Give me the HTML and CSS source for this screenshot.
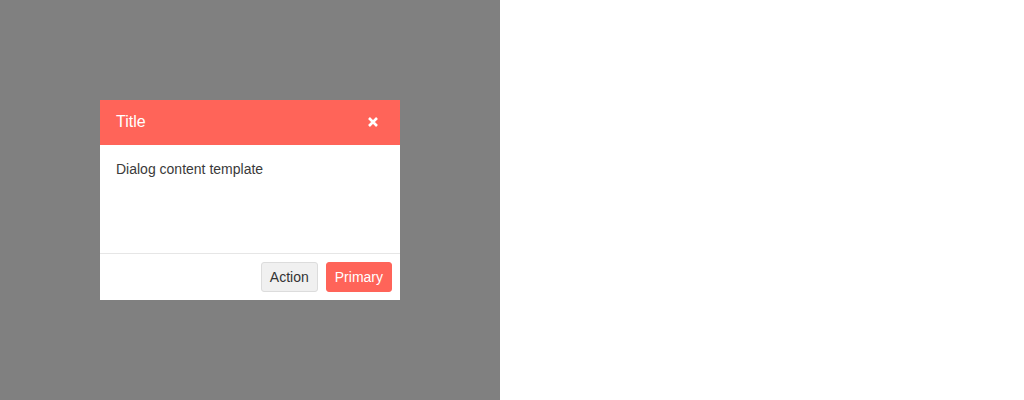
FILE: index.html
```html
<!DOCTYPE html>
<html>
<head>
<meta charset="utf-8">
<link rel="stylesheet" href="styles.css">
</head>
<body>
<div class="stage">
  <div class="overlay">
    <div class="dialog">
      <div class="dialog-header">
        <span class="dialog-title">Title</span>
        <button class="dialog-close" aria-label="Close">
          <svg width="10" height="10" viewBox="0 0 10 10"><path d="M1 1L9 9M9 1L1 9" stroke="#fff" stroke-width="2.6" stroke-linecap="butt"/></svg>
        </button>
      </div>
      <div class="dialog-body">Dialog content template</div>
      <div class="dialog-footer">
        <button class="btn btn-default">Action</button>
        <button class="btn btn-primary">Primary</button>
      </div>
    </div>
  </div>
</div>
</body>
</html>
```
FILE: styles.css
```css
html, body {
  margin: 0;
  padding: 0;
  background: #fff;
  font-family: "Liberation Sans", Arial, sans-serif;
}
.stage {
  width: 1024px;
  height: 400px;
  display: flex;
}
.overlay {
  width: 500px;
  height: 400px;
  background: #808080;
  padding: 100px 0 0 100px;
  box-sizing: border-box;
}
.dialog {
  width: 300px;
  height: 200px;
  background: #fff;
  display: flex;
  flex-direction: column;
}
.dialog-header {
  height: 45px;
  box-sizing: border-box;
  background: #ff6459;
  display: flex;
  align-items: center;
  justify-content: space-between;
  padding: 0 16px 2px 16px;
  color: #fff;
  flex: none;
}
.dialog-title {
  font-size: 16px;
}
.dialog-close {
  background: none;
  border: 0;
  padding: 0;
  margin-right: 6px;
  margin-top: 1px;
  width: 10px;
  height: 10px;
  display: flex;
}
.dialog-body {
  flex: 1;
  padding: 15px 16px;
  font-size: 14px;
  color: #3a3a3a;
  line-height: 18px;
}
.dialog-footer {
  border-top: 1px solid #e6e6e6;
  padding: 8px;
  display: flex;
  justify-content: flex-end;
  gap: 8px;
  flex: none;
}
.btn {
  height: 30px;
  padding: 0 8px;
  font-family: "Liberation Sans", Arial, sans-serif;
  font-size: 14px;
  border-radius: 3px;
  border: 1px solid transparent;
}
.btn-default {
  background: #f0f0f0;
  border-color: #dcdcdc;
  color: #333;
}
.btn-primary {
  background: #ff6459;
  border-color: #ff6459;
  color: #fff;
}
```
